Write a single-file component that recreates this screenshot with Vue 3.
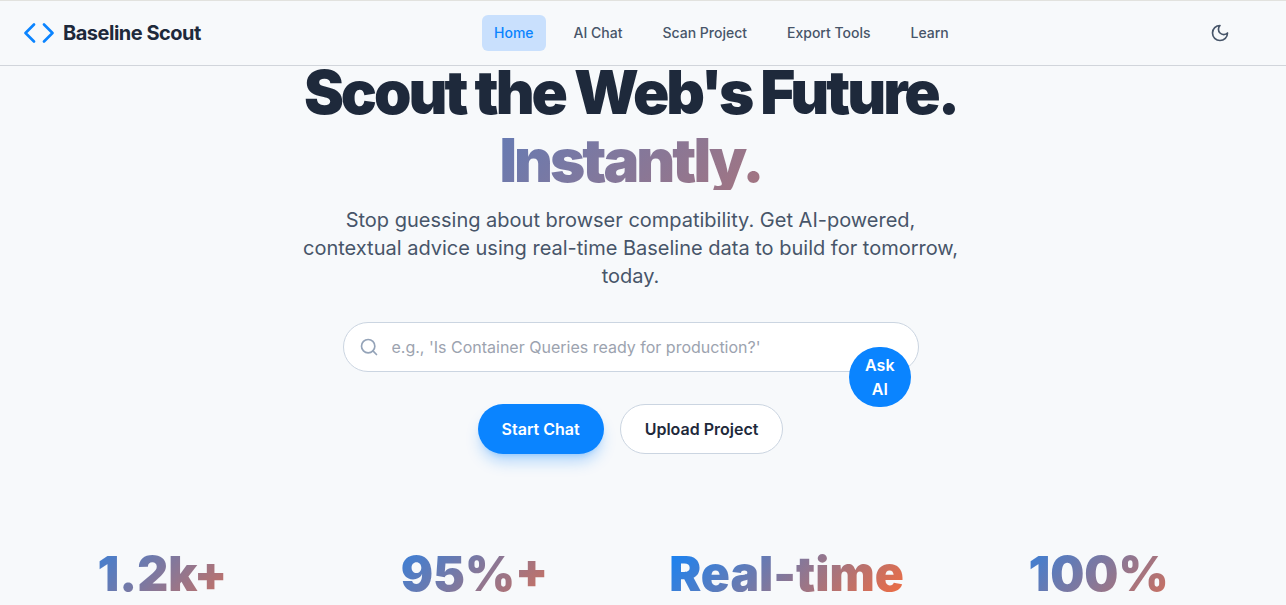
<script setup>
import { ref } from 'vue'

const question = ref('')
const links = [
  { label: 'Home', href: '#home', active: true },
  { label: 'AI Chat', href: '#chat' },
  { label: 'Scan Project', href: '#scan' },
  { label: 'Export Tools', href: '#export' },
  { label: 'Learn', href: '#learn' }
]
const stats = ['1.2k+', '95%+', 'Real-time', '100%']
</script>

<template>
  <div class="page">
    <header class="header">
      <a class="brand" href="#home">
        <svg width="30" height="20" viewBox="0 0 30 20" fill="none" stroke="currentColor" stroke-width="2.6" stroke-linecap="round" stroke-linejoin="round" aria-hidden="true">
          <path d="M10 1.5 1.5 10 10 18.500M20 1.500 28.500 10 20 18.500" />
        </svg>
        <span>Baseline Scout</span>
      </a>
      <nav class="nav" aria-label="Main">
        <a v-for="link in links" :key="link.label" :href="link.href" :class="{ active: link.active }">{{ link.label }}</a>
      </nav>
      <button class="theme" type="button" aria-label="Toggle dark mode">
        <svg width="20" height="20" viewBox="0 0 24 24" fill="none" stroke="currentColor" stroke-width="2" stroke-linecap="round" stroke-linejoin="round" aria-hidden="true">
          <path d="M12 3a6 6 0 0 0 9 9 9 9 0 1 1-9-9Z" />
        </svg>
      </button>
    </header>

    <main class="main">
      <section class="hero">
        <h1>Scout the Web's Future.<span class="gradient">Instantly.</span></h1>
        <p>Stop guessing about browser compatibility. Get AI-powered, contextual advice using real-time Baseline data to build for tomorrow, today.</p>
        <form class="search" @submit.prevent>
          <svg width="20" height="20" viewBox="0 0 24 24" fill="none" stroke="currentColor" stroke-width="2" stroke-linecap="round" stroke-linejoin="round" aria-hidden="true">
            <circle cx="11" cy="11" r="8" />
            <path d="m21 21-4.300-4.300" />
          </svg>
          <input v-model="question" type="text" aria-label="Ask a question" placeholder="e.g., 'Is Container Queries ready for production?'" />
          <button class="ask" type="submit">Ask AI</button>
        </form>
        <div class="actions">
          <button class="primary" type="button">Start Chat</button>
          <button class="secondary" type="button">Upload Project</button>
        </div>
      </section>
      <section class="stats" aria-label="Statistics">
        <div v-for="stat in stats" :key="stat" class="stat gradient">{{ stat }}</div>
      </section>
    </main>
  </div>
</template>

<style>
body {
  background: #f7f9fb;
}
</style>

<style scoped>
.page {
  font-family: Inter, "Liberation Sans", sans-serif;
  font-size: 16px;
  line-height: 24px;
  color: #1e293b;
}
.page * {
  box-sizing: border-box;
}
a {
  text-decoration: none;
}
button {
  font: inherit;
  border: 0;
  cursor: pointer;
}
.header {
  position: fixed;
  top: 0;
  left: 0;
  right: 0;
  z-index: 10;
  display: flex;
  align-items: center;
  height: 66px;
  padding: 0 48px 0 24px;
  background: #f7f9fb;
  border-top: 1px solid #e2e2de;
  border-bottom: 1px solid #d1d5db;
}
.brand {
  display: flex;
  align-items: center;
  gap: 9px;
  margin-right: 40px;
  font-size: 20px;
  line-height: 28px;
  font-weight: 700;
  letter-spacing: -0.025em;
  color: #1e293b;
}
.brand svg {
  color: #0a84ff;
}
.nav {
  display: flex;
  gap: 16px;
  margin: 0 auto;
  font-size: 14px;
  line-height: 20px;
  font-weight: 500;
}
.nav a {
  padding: 8px 12px;
  border-radius: 6px;
  color: #475569;
}
.nav a.active {
  background: #c9e0fd;
  color: #0a84ff;
}
.theme {
  display: flex;
  padding: 8px;
  background: none;
  color: #475569;
}
.main {
  padding: 62px 49px 0 24px;
}
.gradient {
  background: linear-gradient(135deg, #0a84ff, #ff6b35);
  background-clip: text;
  -webkit-background-clip: text;
  color: transparent;
}
.hero {
  display: flex;
  flex-direction: column;
  align-items: center;
  text-align: center;
}
h1 {
  width: 100%;
  margin: 0;
  font-size: 60px;
  line-height: 60px;
  font-weight: 900;
  letter-spacing: -0.05em;
}
h1 span {
  display: block;
  margin-top: 8px;
}
.hero p {
  max-width: 672px;
  margin: 16px 0 32px;
  font-size: 20px;
  line-height: 28px;
  color: #475569;
}
.search {
  position: relative;
  display: flex;
  align-items: center;
  gap: 13px;
  width: 100%;
  max-width: 576px;
  height: 50px;
  padding: 0 15px;
  background: #fff;
  border: 1px solid #cbd5e1;
  border-radius: 25px;
}
.search svg {
  flex: none;
  color: #94a3b8;
}
.search input {
  flex: 1;
  min-width: 0;
  padding: 0;
  border: 0;
  outline: 0;
  background: none;
  font: inherit;
  color: inherit;
}
.search input::placeholder {
  color: #9ca3af;
  opacity: 1;
}
.ask {
  position: absolute;
  top: 50%;
  right: 7px;
  width: min-content;
  padding: 6px 16px;
  border-radius: 999px;
  background: #0a84ff;
  color: #fff;
  font-weight: 600;
}
.actions {
  display: flex;
  gap: 16px;
  margin-top: 32px;
}
.actions button {
  height: 50px;
  padding: 0 24px;
  border-radius: 25px;
  font-weight: 600;
}
.actions .primary {
  background: #0a84ff;
  color: #fff;
  box-shadow: 0 10px 15px -3px rgba(10, 132, 255, 0.3), 0 4px 6px -4px rgba(10, 132, 255, 0.3);
}
.actions .secondary {
  background: #fff;
  color: #1e293b;
  border: 1px solid #cbd5e1;
}
.stats {
  display: grid;
  grid-template-columns: repeat(4, 1fr);
  gap: 48px;
  max-width: 1200px;
  margin: 96px auto 0;
}
.stat {
  font-size: 48px;
  line-height: 48px;
  font-weight: 900;
  text-align: center;
}
</style>
